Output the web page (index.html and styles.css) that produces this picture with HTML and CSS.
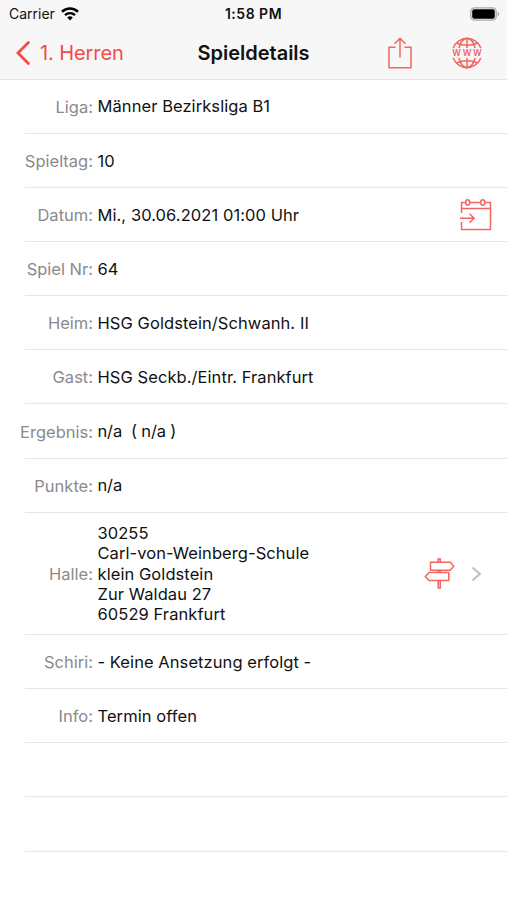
FILE: index.html
```html
<!DOCTYPE html>
<html lang="de">

<head>
    <meta charset="UTF-8">
    <title>Spieldetails</title>
    <link rel="stylesheet" href="styles.css">
</head>

<body>
<header>
    <div class="status">
        <div class="carrier">
            <span>Carrier</span>
            <svg class="wifi" width="18" height="14" viewBox="0 0 18 14">
                <path d="M1 4.8a11.5 11.5 0 0 1 16 0" fill="none" stroke="#000" stroke-width="2.6"/>
                <path d="M4 8.2a7.2 7.2 0 0 1 10 0" fill="none" stroke="#000" stroke-width="2.3"/>
                <path d="M9 13.4L6.2 10.5a4 4 0 0 1 5.600 0z"/>
            </svg>
        </div>
        <div class="time">1:58 PM</div>
        <div class="battery">
            <svg width="30" height="14" viewBox="0 0 30 14">
                <rect x="0.8" y="0.8" width="25.4" height="12.4" rx="3.6" fill="#f7f7f7" stroke="#a9a9a9" stroke-width="1.3"/>
                <rect x="2.2" y="2.2" width="22.6" height="9.6" rx="2"/>
                <path d="M27.600 4.700c2.200 1 2.200 3.600 0 4.600z" fill="#a9a9a9"/>
            </svg>
        </div>
    </div>
    <nav>
        <a class="back" href="#">
            <svg width="14" height="24" viewBox="0 0 14 24">
                <path d="M12.400 1.600L2 12l10.400 10.400" fill="none" stroke="currentColor" stroke-width="2.800" stroke-linecap="round"/>
            </svg>
            <span>1. Herren</span>
        </a>
        <h1>Spieldetails</h1>
        <div class="actions">
            <svg class="icon" width="24" height="32" viewBox="0 0 24 32">
                <path d="M7.500 10.200H1v20.600h22V10.200h-6.500M12 20.500V1.500M6.600 6.800L12 1.400l5.400 5.400"/>
            </svg>
            <svg class="icon" width="32" height="32" viewBox="0 0 32 32">
                <path d="M2.200 11A14.700 14.700 0 0 1 29.800 11M2.200 21A14.700 14.700 0 0 0 29.800 21"/>
                <path d="M16 1.300V11M16 21v9.700M8 11c1-5 3.800-9 8-9.700 4.200.7 7 4.700 8 9.700M8 21c1 5 3.800 9 8 9.700 4.200-.7 7-4.700 8-9.700"/>
                <path d="M5.500 6c6 3 15 3 21 0M5.500 26c6-3 15-3 21 0"/>
                <text class="www" x="16" y="19.200" text-anchor="middle" textLength="29.500">WWW</text>
            </svg>
        </div>
    </nav>
</header>

<main>
    <div class="row"><label>Liga:</label><p>Männer Bezirksliga B1</p></div>
    <div class="row"><label>Spieltag:</label><p>10</p></div>
    <div class="row">
        <label>Datum:</label><p>Mi., 30.06.2021 01:00 Uhr</p>
        <svg class="icon" width="32" height="32" viewBox="0 0 32 32">
            <path d="M1.500 14V3.500h4.200M9.700 3.500h11M24.700 3.500h5.800v27h-29V23M1.500 9.500h29"/>
            <ellipse cx="7.700" cy="3.500" rx="2" ry="2.700"/>
            <ellipse cx="22.700" cy="3.500" rx="2" ry="2.700"/>
            <path d="M0 19.200h14M9.500 14.700l4.600 4.500-4.600 4.500"/>
        </svg>
    </div>
    <div class="row"><label>Spiel Nr:</label><p>64</p></div>
    <div class="row"><label>Heim:</label><p>HSG Goldstein/Schwanh. II</p></div>
    <div class="row"><label>Gast:</label><p>HSG Seckb./Eintr. Frankfurt</p></div>
    <div class="row"><label>Ergebnis:</label><p class="result">n/a&nbsp; ( n/a )</p></div>
    <div class="row"><label>Punkte:</label><p class="result">n/a</p></div>
    <div class="row hall">
        <label>Halle:</label>
        <p>30255<br>Carl-von-Weinberg-Schule<br>klein Goldstein<br>Zur Waldau 27<br>60529 Frankfurt</p>
        <svg class="icon" width="31" height="31" viewBox="0 0 31 31">
            <path d="M6.500 4.200h19.800l3.400 4-3.400 4H6.500zM24.800 14.500H5l-3.700 4 3.700 4h19.800z"/>
            <path d="M14.200 4V1h2v3M14.200 12.300v2h2v-2M14.200 22.600v7.400h2v-7.400"/>
        </svg>
        <svg class="chevron" width="11" height="16" viewBox="0 0 11 16">
            <path d="M1.500 1.500L8.800 8l-7.300 6.500" fill="none" stroke="#c2c2c4" stroke-width="2.200"/>
        </svg>
    </div>
    <div class="row"><label>Schiri:</label><p>- Keine Ansetzung erfolgt -</p></div>
    <div class="row"><label>Info:</label><p>Termin offen</p></div>
    <div class="row"></div>
    <div class="row"></div>
</main>
</body>

</html>
```
FILE: styles.css
```css
* {
    margin: 0;
    padding: 0;
    box-sizing: border-box;
}

body {
    height: 900px;
    overflow: hidden;
    background-color: #fff;
    color: #111;
    font-family: Inter, "Liberation Sans", sans-serif;
    font-size: 16.5px;
}

header {
    height: 79.6px;
    background-color: #f7f7f7;
    border-bottom: 1px solid #e2e2e2;
}

.status {
    height: 27px;
    display: grid;
    grid-template-columns: 1fr auto 1fr;
    align-items: center;
    padding: 0 7px 0 9px;
    font-size: 14px;
}

.carrier {
    display: flex;
    align-items: center;
    gap: 6px;
}

.time {
    font-weight: 600;
    letter-spacing: 0.5px;
    margin-right: 2px;
}

.battery {
    display: flex;
    justify-content: flex-end;
}

nav {
    height: 51px;
    display: grid;
    grid-template-columns: 1fr auto 1fr;
    align-items: center;
    padding: 0 24px 0 16px;
}

.back {
    display: flex;
    align-items: center;
    gap: 10px;
    color: #f24b48;
    font-size: 20px;
    letter-spacing: -0.1px;
    text-decoration: none;
}

h1 {
    margin-left: 8px;
    font-size: 20px;
    font-weight: 600;
}

.actions {
    display: flex;
    justify-content: flex-end;
    gap: 39px;
}

.icon {
    fill: none;
    stroke: #f26562;
    stroke-width: 1.5;
}

.www {
    fill: #f26562;
    stroke: none;
    font-size: 8.5px;
    font-weight: 600;
}

.row {
    position: relative;
    height: 54.15px;
    display: flex;
    align-items: center;
    padding-right: 15px;
}

/* separator starts further right than the labels */
.row::after {
    content: "";
    position: absolute;
    left: 25px;
    right: 0;
    bottom: 0;
    height: 1px;
    background-color: #e6e6e7;
}

.row label {
    width: 93px;
    margin-right: 4.500px;
    text-align: right;
    color: #8a8a8c;
}

.row p {
    flex: 1;
    line-height: 20.4px;
    letter-spacing: 0.07px;
}

.row .result {
    letter-spacing: -0.15px;
}

.hall {
    height: 122.3px;
    padding-right: 25px;
}

.chevron {
    margin-left: 16px;
}
```
